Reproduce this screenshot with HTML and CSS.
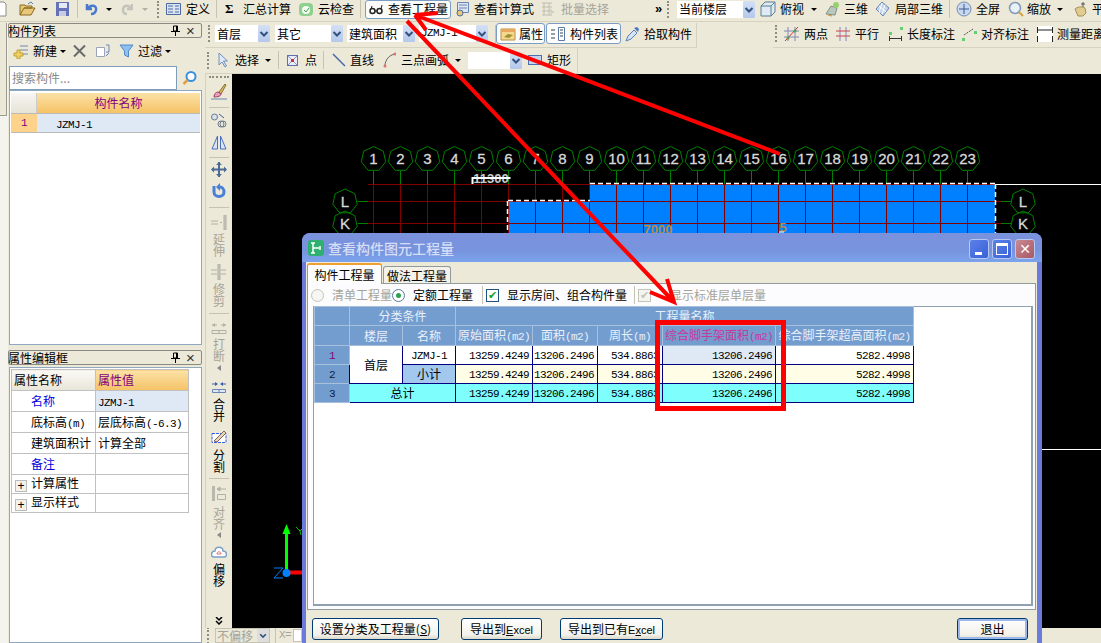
FILE: index.html
```html
<!DOCTYPE html>
<html lang="zh">
<head>
<meta charset="utf-8">
<title>查看构件图元工程量</title>
<link rel="stylesheet" href="styles.css">
</head>
<body>
<svg class="defs" width="0" height="0">
  <symbol id="chev" viewBox="0 0 12 16"><path d="M2.500 6.500 6 10l3.500-3.500" fill="none" stroke="#33507f" stroke-width="2"/></symbol>
  <symbol id="bub" viewBox="-13 -13 26 26" overflow="visible"><polygon points="0,-12.500 9.800,-7.800 12.200,2.800 5.400,11.300 -5.400,11.300 -12.200,2.800 -9.800,-7.800" fill="none" stroke="#008000"/></symbol>
  <symbol id="pin" viewBox="0 0 9 11"><path d="M2.500 1h4v5h-4zM0 6.500h9M4.500 7v4M5.500 1v5" fill="none" stroke="#000"/></symbol>
</svg>
<div class="app">
  <div class="topbar">
    <svg class="ic w8" viewBox="8 0 8 16"><path d="M2 1h10l2 2v12H2z" fill="#fff" stroke="#8a8a8a"/></svg>
    <svg class="ic w17 m11" viewBox="0 0 17 16"><path d="M1 14V4h5l1 1h6v2H5L1 14h11l4-7H5" fill="#e8c878" stroke="#8a6a20"/><path d="M9 3l3-2 2 2" fill="none" stroke="#5a7ab0"/></svg>
    <i class="caret m6"></i>
    <svg class="ic w14 m8" viewBox="0 0 14 16"><path d="M0 1h13v14H0z" fill="#6672b8"/><path d="M3 2h8v5H3z" fill="#e4e8f8"/><path d="M3 10h7v5H3z" fill="#c8cce0"/></svg>
    <i class="sep m7"></i>
    <svg class="ic w13 m7" viewBox="0 0 13 16"><path d="M2 3v5h5M3 8c2-5 9-4 8 1-.5 3-3 4-5 4" fill="none" stroke="#4a7ad0" stroke-width="2.500"/></svg>
    <i class="caret m8"></i>
    <svg class="ic w12 m9" viewBox="0 0 12 16"><path d="M11 3v5H6M10 8C8 3 2 4 2 9c0 3 2 4 4 4" fill="none" stroke="#c4c4ba" stroke-width="2.500"/></svg>
    <i class="caret dis m9"></i>
    <i class="grip m9"></i>
    <svg class="ic w15 m6" viewBox="0 0 15 16"><path d="M.5 2.500h14v11H.5z" fill="#dce4f4" stroke="#4a6aa0"/><path d="M2 5h5M2 8h5M2 11h5M9 5h4M9 8h4M9 11h4" stroke="#4a6aa0"/></svg>
    <span class="t w24 m5">定义</span>
    <i class="sep m6"></i>
    <span class="sigma m8">Σ</span>
    <span class="t w48 m9">汇总计算</span>
    <svg class="ic w16 m7" viewBox="0 0 16 16"><rect x="1" y="2" width="14" height="13" rx="4" fill="#8ed090"/><circle cx="8" cy="9" r="4" fill="#f4fbf2"/><path d="M6 9l2 2 3-4" fill="none" stroke="#48a050"/></svg>
    <span class="t w36 m4">云检查</span>
    <i class="sep m6"></i>
    <div class="tbtn top-active m4">
      <svg class="ic w14" viewBox="0 0 14 16"><circle cx="3.500" cy="10" r="2.500" fill="none" stroke="#222" stroke-width="1.500"/><circle cx="10.500" cy="10" r="2.500" fill="none" stroke="#222" stroke-width="1.500"/><path d="M6 10h2M12 8l1-4M2 8l1-3" stroke="#222"/></svg>
      <span class="t w60 m5">查看工程量</span>
    </div>
    <svg class="ic w15 m4" viewBox="0 0 15 16"><path d="M2.500 1.500h11v10h-11z" fill="#dfe6f2" stroke="#6a86b4"/><path d="M4 4h8M4 7h8" stroke="#6a86b4"/><circle cx="5" cy="12" r="3" fill="#e8c878" stroke="#4a6aa0"/></svg>
    <span class="t w60 m4">查看计算式</span>
    <svg class="ic w15 m7" viewBox="0 0 15 16"><path d="M1 2h10M1 6h10M1 10h10M1 14h10M3 2v12M8 2v12" stroke="#bdbdb0"/><path d="M9 7l5 5-3 0-1 3z" fill="#cfcfc4"/></svg>
    <span class="t w48 m5 off">批量选择</span>
    <span class="more m46">»</span>
    <i class="grip m5"></i>
    <div class="combo w78 m7"><span>当前楼层</span><svg class="chev"><use href="#chev"/></svg></div>
    <svg class="ic w16 m5" viewBox="0 0 16 16"><path d="M1 5l4-4h10v10l-4 4H1z" fill="#dfeaf4" stroke="#5a7f90"/><path d="M1 5h10v10M11 5l4-4" fill="none" stroke="#5a7f90"/></svg>
    <span class="t w24 m4">俯视</span>
    <i class="caret m7"></i>
    <svg class="ic w15 m8" viewBox="0 0 15 16"><path d="M1 13l5-8 6 2-2 7z" fill="#b8c8c0" stroke="#80907c"/><circle cx="11" cy="4" r="3" fill="#98d070"/><path d="M3 14l4 1" stroke="#d09040"/></svg>
    <span class="t w24 m4">三维</span>
    <svg class="ic w15 m7" viewBox="0 0 15 16"><path d="M1 8l6-7 7 6-6 8z" fill="#c4d4ec" stroke="#6a86b4"/><path d="M4 5l7 6M7 2l-3 10M10 4l-3 9" stroke="#fff"/></svg>
    <span class="t w48 m5">局部三维</span>
    <i class="sep m6"></i>
    <svg class="ic w16 m6" viewBox="0 0 16 16"><circle cx="8" cy="8" r="7" fill="#c8d8f0" stroke="#7a90b0"/><path d="M8 3v10M3 8h10" stroke="#3a5a90"/></svg>
    <span class="t w24 m4">全屏</span>
    <svg class="ic w16 m8" viewBox="0 0 16 16"><circle cx="7" cy="7" r="5.500" fill="#e8f0f8" stroke="#8098b8" stroke-width="1.500"/><path d="M11 11l4 4" stroke="#d8a040" stroke-width="2"/></svg>
    <span class="t w24 m3">缩放</span>
    <i class="caret m6"></i>
    <svg class="ic w16 m9" viewBox="0 0 16 16"><path d="M3 8c2-2 7-3 10-1l1 5-3 3H6z" fill="#e0cc90" stroke="#a89050"/><path d="M11 1v5M9 3h4" stroke="#555"/></svg>
    <span class="t w12 m4">平</span>
  </div>

  <div class="work">
    <div class="dock"><div class="dock-top"></div></div>
    <div class="left">
      <div class="ptitle"><span class="ptxt">构件列表</span><svg class="pin"><use href="#pin"/></svg><span class="px">×</span></div>
      <div class="ltools">
        <svg class="ic w16" viewBox="0 0 16 16"><path d="M7 3h8M7 7h8M7 11h8" stroke="#7088b0"/><path d="M1 10h3V7h3v3h3v3H7v3H4v-3H1z" fill="#f0d060" stroke="#c0a030"/></svg>
        <span class="t w24 m4">新建</span>
        <i class="caret m3"></i>
        <svg class="ic w13 m7" viewBox="0 0 13 13"><path d="M1 1l11 11M12 1L1 12" stroke="#6a6a6a" stroke-width="2"/></svg>
        <svg class="ic w15 m9" viewBox="0 0 15 16"><path d="M1.500 4.500h8v9h-8z" fill="#fff" stroke="#9aa4b8"/><path d="M11 2h3v7h-3M11 13l3-3" fill="none" stroke="#6a86c0"/></svg>
        <svg class="ic w15 m9" viewBox="0 0 15 16"><path d="M1 2h13L9.500 8v6l-4-2V8z" fill="#8cc0f0" stroke="#5088c8"/></svg>
        <span class="t w24 m4">过滤</span>
        <i class="caret m3"></i>
      </div>
      <div class="searchrow">
        <div class="search">搜索构件...</div>
        <svg class="ic w15 m5" viewBox="0 0 15 15"><circle cx="9" cy="6" r="4.500" fill="#fff" stroke="#3a90e0" stroke-width="2"/><path d="M5.500 9.500L1.500 13.500" stroke="#e0a040" stroke-width="2.500"/></svg>
      </div>
      <div class="lgrid">
        <div class="lhead"><div class="corner"></div><div class="lh-name">构件名称</div></div>
        <div class="lrow"><div class="lnum">1</div><div class="lcell"><span class="la">JZMJ-1</span></div></div>
      </div>
      <div class="ptitle second"><span class="ptxt">属性编辑框</span><svg class="pin"><use href="#pin"/></svg><span class="px">×</span></div>
      <div class="pframe">
        <table class="ptable">
          <tr class="pr-h"><th class="pth">属性名称</th><th class="pval-h">属性值</th></tr>
          <tr><td class="ind blue">名称</td><td class="sel"><span class="la">JZMJ-1</span></td></tr>
          <tr><td class="ind">底标高<span class="la">(m)</span></td><td>层底标高<span class="la">(-6.3)</span></td></tr>
          <tr><td class="ind">建筑面积计</td><td>计算全部</td></tr>
          <tr><td class="ind blue">备注</td><td></td></tr>
          <tr class="short"><td class="ind exp"><i class="plus">+</i>计算属性</td><td></td></tr>
          <tr class="short"><td class="ind exp"><i class="plus">+</i>显示样式</td><td></td></tr>
        </table>
      </div>
    </div>

    <div class="right">
      <div class="row1">
        <div class="seg seg1">
          <i class="grip m3"></i>
          <div class="combo w55 m4"><span>首层</span><svg class="chev"><use href="#chev"/></svg></div>
          <div class="combo w68 m5"><span>其它</span><svg class="chev"><use href="#chev"/></svg></div>
          <div class="combo w68 m4"><span>建筑面积</span><svg class="chev"><use href="#chev"/></svg></div>
          <div class="combo w69 m4"><span class="la">JZMJ-1</span><svg class="chev"><use href="#chev"/></svg></div>
          <i class="sep m7"></i>
          <div class="tbtn w49"><svg class="ic w16" viewBox="0 0 16 16"><path d="M1 3h14v11H1z" fill="#f4d890" stroke="#b89040"/><path d="M1 3h14v3H1z" fill="#e8a860"/><path d="M4 11l4-3 5 1-4 3z" fill="#a09030"/></svg><span class="t w24 m3">属性</span></div>
          <div class="tbtn w75 m1"><svg class="ic w16" viewBox="0 0 16 16"><path d="M8.500 1.500h6v13h-6z" fill="#fff" stroke="#5a78a8"/><path d="M10 4h3M10 7h3M10 10h3M1 4h4M1 8h4M1 12h4" stroke="#345"/></svg><span class="t w48 m4">构件列表</span></div>
          <svg class="ic w15 m4" viewBox="0 0 15 16"><path d="M1 15l2-5 6-6 3 3-6 6z" fill="#d4e4f4" stroke="#5a80b8"/><path d="M9 2l4 4 1-3-2-2z" fill="#4a78c0"/></svg>
          <span class="t w48 m4">拾取构件</span>
        </div>
        <div class="seg seg2">
          <i class="grip m2"></i>
          <svg class="ic w15 m6" viewBox="0 0 15 16"><path d="M0 5h15M0 11h15M4 1v14M11 1v14" stroke="#8088b8"/><path d="M1 15L14 1" stroke="#d03030"/><circle cx="4" cy="12" r="1.500" fill="#50a050"/><circle cx="11" cy="5" r="1.500" fill="#50a050"/></svg>
          <span class="t w24 m5">两点</span>
          <svg class="ic w14 m8" viewBox="0 0 14 16"><path d="M4 1v14M10 1v14" stroke="#8088c0"/><path d="M0 5h14M0 10h14" stroke="#d04050"/></svg>
          <span class="t w24 m5">平行</span>
          <svg class="ic w15 m9" viewBox="0 0 15 16"><path d="M1.500 10v5M13.500 10v5M1 12.500h13" stroke="#333"/><rect x="1" y="6" width="3" height="3" fill="#60d070"/><rect x="12" y="1" width="3" height="3" fill="#60d070"/></svg>
          <span class="t w48 m4">长度标注</span>
          <svg class="ic w17 m6" viewBox="0 0 17 16"><path d="M3 9l9-6" stroke="#555" stroke-dasharray="2 1"/><rect x="1" y="12" width="3" height="3" fill="#60d070"/><rect x="13" y="5" width="3" height="3" fill="#60d070"/></svg>
          <span class="t w48 m3">对齐标注</span>
          <svg class="ic w16 m8" viewBox="0 0 16 16"><rect width="16" height="16" fill="#fff"/><path d="M.5 1v6M15.500 1v6M0 4h16M.5 10v6M15.500 10v6" stroke="#222"/></svg>
          <span class="t w48 m4">测量距离</span>
        </div>
      </div>
      <div class="row2">
        <div class="seg seg3">
          <i class="grip m2"></i>
          <svg class="ic w10 m8" viewBox="0 0 10 16"><path d="M1 1v12l3-3 3 5 1.500-1-3-5h4z" fill="#dfe8f8" stroke="#7090b8"/></svg>
          <span class="t w24 m7">选择</span>
          <i class="caret m6"></i>
          <i class="sep m7"></i>
          <svg class="ic w11 m8" viewBox="0 0 11 11"><rect x=".5" y=".5" width="10" height="10" fill="#e8ecf8" stroke="#6070b0"/><path d="M1 1l9 9M10 1l-9 9" stroke="#9098c8"/><rect x="4" y="4" width="3" height="3" fill="#d03030"/></svg>
          <span class="t w12 m7">点</span>
          <i class="sep m6"></i>
          <svg class="ic w14 m8" viewBox="0 0 14 14"><path d="M1 1l12 12" stroke="#4868a8" stroke-width="1.500"/></svg>
          <span class="t w24 m4">直线</span>
          <svg class="ic w13 m9" viewBox="0 0 13 16"><path d="M2 14C2 8 6 3 12 2" fill="none" stroke="#606060"/><circle cx="2" cy="14" r="1.500" fill="#e07070"/><circle cx="12" cy="2" r="1.500" fill="#e07070"/></svg>
          <span class="t w48 m5">三点画弧</span>
          <i class="caret m6"></i>
          <div class="combo blank w54 m7"><svg class="chev"><use href="#chev"/></svg></div>
          <svg class="ic w14 m6" viewBox="0 0 14 10"><rect x=".5" y=".5" width="13" height="9" fill="#c4d4ee" stroke="#4a70b0"/></svg>
          <span class="t w24 m5">矩形</span>
        </div>
      </div>
      <div class="stage">
        <div class="vtools">
          <i class="vgrip"></i>
          <svg class="vic h17 t4" viewBox="0 0 16 17"><path d="M8 9l6-8 1 1-5 9z" fill="#d8b860" stroke="#8a7030"/><path d="M3 14c0-3 2-5 4-5l3 2c0 2-3 3-7 3z" fill="#e8a0b8" stroke="#a04060"/><path d="M0 16h16" stroke="#6a86b4"/></svg>
          <i class="vsep t7"></i>
          <svg class="vic h15 t5" viewBox="0 0 16 15"><circle cx="3.500" cy="4" r="3" fill="#d8e0ee" stroke="#6a7a90"/><circle cx="10" cy="11" r="3" fill="none" stroke="#6a7a90"/><circle cx="12" cy="11" r="3" fill="none" stroke="#6a7a90"/><path d="M8 1l5 4" stroke="#3a60a0"/></svg>
          <svg class="vic h15 t7" viewBox="0 0 16 15"><path d="M6.500 1v13H1zM9.500 1v13H15z" fill="#dbe4f4" stroke="#4a70c0"/></svg>
          <i class="vsep t7"></i>
          <svg class="vic h15 t4" viewBox="0 0 16 15"><path d="M8 0v15M1 7.500h14" stroke="#4a6a98" stroke-width="2"/><path d="M8 0l-3 3h6zM8 15l-3-3h6zM0 7.500l3-3v6zM16 7.500l-3-3v6z" fill="#4a6a98"/></svg>
          <svg class="vic h15 t6" viewBox="0 0 16 15"><path d="M3 3v6c0 6 10 6 10 0 0-3-2-5-4-5" fill="none" stroke="#4a80d8" stroke-width="3"/><path d="M9 0v8L5 4z" fill="#4a80d8"/></svg>
          <i class="vsep t9"></i>
          <svg class="vic h15 t7" viewBox="0 0 16 15"><path d="M0 6h7M0 9h7M9 7.500h2" stroke="#b0b0a4"/><rect x="13" y="0" width="2" height="15" fill="#c8c8bc" stroke="#b0b0a4"/></svg>
          <span class="vtxt off t3">延伸</span>
          <svg class="vic h16 t7" viewBox="0 0 16 16"><path d="M0 6h6M0 10h6M10 6h5M10 10h5" stroke="#b0b0a4"/><rect x="7" y="0" width="2" height="16" fill="#c8c8bc" stroke="#b0b0a4"/></svg>
          <span class="vtxt off t3">修剪</span>
          <i class="vsep t6"></i>
          <svg class="vic h12 t8" viewBox="0 0 16 12"><path d="M1 3h5M15 3h-5M1 8.500h14v3H1zM8 8.500v3" fill="none" stroke="#b0b0a4"/><path d="M1 3l3-2v4zM15 3l-3-2v4z" fill="#b0b0a4"/></svg>
          <span class="vtxt off t4">打断</span>
          <i class="vtri t3"></i>
          <svg class="vic h12 t10" viewBox="0 0 16 12"><path d="M1 3h5M15 3h-5" stroke="#3a60b0"/><path d="M7 3L4 1v4zM9 3l3-2v4z" fill="#3a60b0"/><path d="M1.500 8.500h13v3h-13zM8 8.500v3" fill="#dfe6f4" stroke="#6a86b4"/></svg>
          <span class="vtxt t5">合并</span>
          <svg class="vic h15 t7" viewBox="0 0 16 15"><path d="M1 4.500h14v9H1z" fill="#fff" stroke="#3a60e0" stroke-dasharray="3 1"/><path d="M3 12L13 2l2 2L6 13z" fill="#e8d8b0" stroke="#806060"/></svg>
          <span class="vtxt t5">分割</span>
          <i class="vsep t5"></i>
          <svg class="vic h15 t7" viewBox="0 0 16 15"><rect x="1" y="0" width="3" height="15" fill="#b8b8ac"/><path d="M6 3h9M6 3l3-2v4z" stroke="#b0b0a4" fill="#b0b0a4"/><path d="M6.500 8.500h8v5h-8z" fill="none" stroke="#b0b0a4"/></svg>
          <span class="vtxt off t5">对齐</span>
          <i class="vtri t2"></i>
          <svg class="vic h12 t8" viewBox="0 0 16 12"><path d="M3 11C-1 11 0 5 4 5c0-5 8-5 8 0 4 0 5 6 1 6z" fill="#fff" stroke="#7aa0c8" stroke-width="1.500"/><path d="M6 8c0-3 4-3 4 0z" fill="none" stroke="#e07070"/></svg>
          <span class="vtxt t5">偏移</span>
          <svg class="vic h8 t30" viewBox="0 0 8 8"><path d="M1 0l3 3 3-3M1 4l3 3 3-3" fill="none" stroke="#000" stroke-width="1.500"/></svg>
        </div>
        <div class="canvas">
          <svg class="cad" viewBox="232 74 869 554" width="869" height="554">
            <path d="M590 184h405v60H508v-43h82z" fill="#0080ff"/>
            <path class="wl" d="M995 184.500h106M1042 449.500h59"/>
            <path class="gl" d="M373.500 184v60M400.500 184v60M427.500 184v60M454.500 184v60M481.500 184v60M508.500 184v60M535.500 184v60M562.500 184v60M589.500 184v60M616.500 184v60M643.500 184v60M670.500 184v60M697.500 184v60M724.500 184v60M751.500 184v60M778.500 184v60M805.500 184v60M832.500 184v60M859.500 184v60M886.500 184v60M913.500 184v60M940.500 184v60M967.500 184v60M368 184.500h627M368 201.500h627M368 223.500h627M995 201.500h6M995 223.500h6"/>
            <path class="stem" d="M373.500 171v13M400.500 171v13M427.500 171v13M454.500 171v13M481.500 171v13M508.500 171v13M535.500 171v13M562.500 171v13M589.500 171v13M616.500 171v13M643.500 171v13M670.500 171v13M697.500 171v13M724.500 171v13M751.500 171v13M778.500 171v13M805.500 171v13M832.500 171v13M859.500 171v13M886.500 171v13M913.500 171v13M940.500 171v13M967.500 171v13M358 201.500h10M358 223.500h10M1001 201.500h10M1001 223.500h10"/>
            <path class="dash" d="M508 200.500h82M590 183.500h405M507.500 201v40M995.500 184v60"/>
            <g class="bubs">
              <use href="#bub" x="360.500" y="146" width="26" height="26"/><use href="#bub" x="387.500" y="146" width="26" height="26"/><use href="#bub" x="414.500" y="146" width="26" height="26"/><use href="#bub" x="441.500" y="146" width="26" height="26"/><use href="#bub" x="468.500" y="146" width="26" height="26"/><use href="#bub" x="495.500" y="146" width="26" height="26"/><use href="#bub" x="522.500" y="146" width="26" height="26"/><use href="#bub" x="549.500" y="146" width="26" height="26"/><use href="#bub" x="576.500" y="146" width="26" height="26"/><use href="#bub" x="603.500" y="146" width="26" height="26"/><use href="#bub" x="630.500" y="146" width="26" height="26"/><use href="#bub" x="657.500" y="146" width="26" height="26"/><use href="#bub" x="684.500" y="146" width="26" height="26"/><use href="#bub" x="711.500" y="146" width="26" height="26"/><use href="#bub" x="738.500" y="146" width="26" height="26"/><use href="#bub" x="765.500" y="146" width="26" height="26"/><use href="#bub" x="792.500" y="146" width="26" height="26"/><use href="#bub" x="819.500" y="146" width="26" height="26"/><use href="#bub" x="846.500" y="146" width="26" height="26"/><use href="#bub" x="873.500" y="146" width="26" height="26"/><use href="#bub" x="900.500" y="146" width="26" height="26"/><use href="#bub" x="927.500" y="146" width="26" height="26"/><use href="#bub" x="954.500" y="146" width="26" height="26"/>
              <use href="#bub" x="332" y="188.500" width="26" height="26"/><use href="#bub" x="332" y="210.500" width="26" height="26"/><use href="#bub" x="1010" y="188.500" width="26" height="26"/><use href="#bub" x="1010" y="210.500" width="26" height="26"/>
            </g>
            <g class="bn">
              <text x="373.500" y="164">1</text><text x="400.500" y="164">2</text><text x="427.500" y="164">3</text><text x="454.500" y="164">4</text><text x="481.500" y="164">5</text><text x="508.500" y="164">6</text><text x="535.500" y="164">7</text><text x="562.500" y="164">8</text><text x="589.500" y="164">9</text><text x="616.500" y="164">10</text><text x="643.500" y="164">11</text><text x="670.500" y="164">12</text><text x="697.500" y="164">13</text><text x="724.500" y="164">14</text><text x="751.500" y="164">15</text><text x="778.500" y="164">16</text><text x="805.500" y="164">17</text><text x="832.500" y="164">18</text><text x="859.500" y="164">19</text><text x="886.500" y="164">20</text><text x="913.500" y="164">21</text><text x="940.500" y="164">22</text><text x="967.500" y="164">23</text>
              <text x="345" y="207">L</text><text x="345" y="229">K</text><text x="1023" y="207">L</text><text x="1023" y="229">K</text>
            </g>
            <text class="dim" x="491" y="183">11300</text>
            <path class="wl strike" d="M472.500 184v-6h38"/>
            <text class="dim orange" x="658" y="234">7000</text>
            <path class="wl" d="M644 234h6"/>
            <text class="dim orange" x="783" y="232">5</text>
            <path class="wl" d="M779 232h5"/>
            <path class="axg" d="M286.500 572V534"/>
            <path class="agh" d="M286.500 524l-4 10h8z"/>
            <path class="axr" d="M290 572.500h14"/>
            <circle cx="286.500" cy="573" r="4" fill="#0080ff"/>
            <path class="axz" d="M274 568h9l-9 10h9"/>
            <path class="axy" d="M296 527l4 4 3-3M300 531l1 4"/>
          </svg>
        </div>
      </div>
      <div class="status">
        <i class="grip m2"></i>
        <div class="combo w55 off-combo m5"><span>不偏移</span><svg class="chev"><use href="#chev"/></svg></div>
        <i class="sep m5"></i>
        <span class="la off m3">X=</span>
        <div class="xbox"></div>
      </div>
    </div>
  </div>

  <div class="dialog">
    <div class="dtitle">
      <svg class="dlogo" viewBox="0 0 16 16"><rect width="16" height="16" rx="3" fill="#30b070"/><path d="M5 3v10M3 3h4M3 13h4M5 8h6M12 6v4" stroke="#fff" stroke-width="1.500" fill="none"/></svg>
      <span class="dtxt">查看构件图元工程量</span>
      <div class="wbtns">
        <i class="wb"><b class="wmin"></b></i>
        <i class="wb"><b class="wmax"></b></i>
        <i class="wb close">✕</i>
      </div>
    </div>
    <div class="dbody">
      <div class="tabs"><div class="tab on">构件工程量</div><div class="tab">做法工程量</div></div>
      <div class="tabpanel">
        <div class="opts">
          <i class="radio"></i><span class="t w60 m8 off">清单工程量</span>
          <i class="radio on"></i><span class="t w60 m8">定额工程量</span>
          <i class="sep m9"></i>
          <i class="chk m3">✔</i><span class="t m8">显示房间、组合构件量</span>
          <i class="sep m7"></i>
          <i class="chk dis m3">✔</i><span class="t m19 off">显示标准层单层量</span>
        </div>
        <div class="gridframe">
          <table class="qt">
            <colgroup><col class="c0"><col class="c1"><col class="c1"><col class="c3"><col class="c4"><col class="c4"><col class="c6"><col class="c7"></colgroup>
            <tr class="hr1"><th class="rh"></th><th colspan="2">分类条件</th><th colspan="5">工程量名称</th></tr>
            <tr class="hr2"><th class="rh"></th><th>楼层</th><th>名称</th><th>原始面积<span class="la">(m2)</span></th><th>面积<span class="la">(m2)</span></th><th>周长<span class="la">(m)</span></th><th class="pink">综合脚手架面积<span class="la">(m2)</span></th><th>综合脚手架超高面积<span class="la">(m2)</span></th></tr>
            <tr><th class="rh act"><span class="la">1</span></th><td rowspan="2" class="ctr">首层</td><td class="ctr"><span class="la">JZMJ-1</span></td><td class="n"><span class="la">13259.4249</span></td><td class="n"><span class="la">13206.2496</span></td><td class="n"><span class="la">534.8863</span></td><td class="n selc"><span class="la">13206.2496</span></td><td class="n"><span class="la">5282.4998</span></td></tr>
            <tr class="sub"><th class="rh"><span class="la">2</span></th><td class="ctr subname">小计</td><td class="n"><span class="la">13259.4249</span></td><td class="n"><span class="la">13206.2496</span></td><td class="n"><span class="la">534.8863</span></td><td class="n"><span class="la">13206.2496</span></td><td class="n"><span class="la">5282.4998</span></td></tr>
            <tr class="tot"><th class="rh"><span class="la">3</span></th><td colspan="2" class="ctr">总计</td><td class="n"><span class="la">13259.4249</span></td><td class="n"><span class="la">13206.2496</span></td><td class="n"><span class="la">534.8863</span></td><td class="n"><span class="la">13206.2496</span></td><td class="n"><span class="la">5282.4998</span></td></tr>
          </table>
        </div>
      </div>
      <div class="dfoot">
        <button class="btn b1">设置分类及工程量(<u>S</u>)</button>
        <button class="btn b2">导出到<span class="ex"><u>E</u>xcel</span></button>
        <button class="btn b3">导出到已有<span class="ex">E<u>x</u>cel</span></button>
        <button class="btn b4">退出</button>
      </div>
    </div>
  </div>

  <svg class="marks" viewBox="0 0 1101 643" width="1101" height="643">
    <path d="M780 154L415 15L438 13M415 15L426 30M407 21L674 302M667 279L674 302L650 292"/>
    <rect x="657.500" y="322.500" width="126" height="86"/>
  </svg>
</div>
</body>
</html>
```
FILE: styles.css
```css
* { box-sizing: border-box; }
html, body { margin: 0; padding: 0; }
body { font: 12px/14px "Noto Sans CJK SC", "Liberation Sans", sans-serif; color: #000; background: #ece9d8; overflow: hidden; }
i { font-style: normal; display: block; flex: none; }
.defs { position: absolute; }
.app { position: relative; width: 1101px; height: 643px; overflow: hidden; display: flex; flex-direction: column; background: #ece9d8; }
.la { font-family: "Liberation Mono", "Noto Sans CJK SC", monospace; font-size: 11px; letter-spacing: -.6px; line-height: 1; }

/* spacing helpers */
.m1 { margin-left: 1px; } .m2 { margin-left: 2px; } .m3 { margin-left: 3px; } .m4 { margin-left: 4px; }
.m5 { margin-left: 5px; } .m6 { margin-left: 6px; } .m7 { margin-left: 7px; } .m8 { margin-left: 8px; }
.m9 { margin-left: 9px; } .m10 { margin-left: 10px; } .m11 { margin-left: 11px; } .m19 { margin-left: 19px; } .m46 { margin-left: 46px; }
.t2 { margin-top: 2px; } .t3 { margin-top: 3px; } .t4 { margin-top: 4px; } .t5 { margin-top: 5px; } .t6 { margin-top: 6px; }
.t7 { margin-top: 7px; } .t8 { margin-top: 8px; } .t9 { margin-top: 9px; } .t10 { margin-top: 10px; } .t30 { margin-top: 30px; }

.ic { flex: none; display: block; height: 16px; }
.w8 { width: 8px; } .w10 { width: 10px; } .w11 { width: 11px; height: 11px; } .w12 { width: 12px; } .w13 { width: 13px; } .w14 { width: 14px; }
.w15 { width: 15px; } .w16 { width: 16px; } .w17 { width: 17px; } .w24 { width: 24px; } .w36 { width: 36px; } .w48 { width: 48px; } .w60 { width: 60px; }
.t { flex: none; white-space: nowrap; }
.off { color: #a6a498; }
.caret { height: 0; border: 3px solid transparent; border-top: 3px solid #000; border-bottom-width: 0; width: 6px; }
.caret.dis { border-top-color: #b0b0a4; }
.sep { width: 1px; height: 18px; background: #c6c3b2; }
.grip { width: 3px; height: 17px; border-left: 2px dotted #8d8d84; }
.sigma { flex: none; width: 9px; font: bold 13px/14px "Liberation Serif", serif; }
.more { flex: none; width: 7px; font: bold 13px/14px "Liberation Sans", sans-serif; }

.combo { flex: none; height: 17px; background: #fff; display: flex; align-items: center; justify-content: space-between; padding-left: 2px; }
.w54 { width: 54px; } .w55 { width: 55px; } .w68 { width: 68px; } .w69 { width: 69px; } .w78 { width: 78px; }
.chev { width: 12px; height: 17px; background: linear-gradient(#d4e0f5, #b4c8ec); flex: none; border-radius: 1px; }
.off-combo { color: #a6a498; background: #ece9d8; border: 1px solid #c6c3b2; height: 15px; padding-left: 1px; }
.off-combo .chev { height: 13px; background: #ddd; }
.blank { justify-content: flex-end; }

.tbtn { flex: none; display: flex; align-items: center; height: 21px; border: 1px solid #7c9cc4; border-radius: 3px; background: #fbfbf9; padding-left: 3px; }
.top-active { width: 86px; height: 19px; }
.w49 { width: 49px; } .w75 { width: 75px; }

.topbar { flex: none; height: 22px; padding-bottom: 3px; display: flex; align-items: center; border-bottom: 1px solid #d5d2c0; }

.work { flex: 1; min-height: 0; display: flex; margin-top: 1px; }
.dock { flex: none; width: 8px; background: #f5f3ee; }
.dock-top { width: 7px; height: 93px; background: #ece9d8; border-right: 1px solid #9a9a90; border-bottom: 1px solid #9a9a90; }
.left { flex: none; width: 197px; display: flex; flex-direction: column; }
.ptitle { flex: none; height: 15px; width: 194px; border: 1px solid #8a8a80; border-radius: 2px; display: flex; align-items: center; overflow: hidden; background: #ece9d8; }
.second { margin-top: 5px; }
.ptxt { flex: 1; line-height: 13px; margin-left: -1px; }
.pin { width: 9px; height: 11px; flex: none; }
.px { width: 21px; font: 15px/12px "Liberation Sans", sans-serif; text-align: center; color: #333; }
.ltools { flex: none; height: 26px; display: flex; align-items: center; padding-left: 5px; }
.searchrow { flex: none; height: 25px; margin-top: 1px; display: flex; align-items: center; padding-left: 1px; }
.search { flex: none; width: 168px; height: 24px; border: 1px solid #7f9db9; background: #fff; color: #8a8a8a; padding: 3px 2px; line-height: 16px; }
.lgrid { flex: none; height: 255px; width: 193px; margin-left: 1px; background: #fff; border: 1px solid #8fa8c0; padding: 2px 1px; }
.lhead { display: flex; height: 21px; border-bottom: 1px solid #bbb; }
.corner { width: 26px; background: linear-gradient(#f7f6f2, #e6e3d6); border-right: 1px solid #ccc; }
.lh-name { width: 163px; background: linear-gradient(#fbe2a6, #f5c266); color: #800080; text-align: center; line-height: 20px; }
.lrow { display: flex; height: 19px; border-bottom: 1px solid #bbb; }
.lnum { width: 26px; background: #fdd38c; color: #800080; font: 11px/18px "Liberation Mono", monospace; padding-left: 10px; }
.lcell { width: 163px; background: #dfe8f5; line-height: 18px; padding-left: 19px; }
.pframe { flex: 1; margin-top: 2px; width: 193px; margin-left: 1px; background: #fff; border: 1px solid #8fa8c0; padding: 1px 1px 0; }
.ptable { border-collapse: collapse; table-layout: fixed; width: 178px; }
.ptable td, .ptable th { border: 1px solid #c0c0c0; height: 21px; padding: 0 2px; font-weight: normal; text-align: left; white-space: nowrap; overflow: hidden; }
.ptable .pth { width: 84px; background: linear-gradient(#faf9f5, #e8e5d8); padding-left: 2px; }
.ptable .pval-h { background: linear-gradient(#fbe2a6, #f5c266); color: #800080; }
.ptable .ind { padding-left: 19px; width: 84px; }
.ptable .exp { padding-left: 3px; }
.blue { color: #0000e0; }
.ptable .sel { background: #dfe8f5; }
.short td { height: 19px !important; }
.plus { display: inline-block; width: 12px; height: 12px; border: 1px solid #bbb; background: #f4f2ea; margin-right: 4px; font: 12px/10px "Liberation Sans", sans-serif; text-align: center; vertical-align: -2px; }

.right { flex: 1; min-width: 0; display: flex; flex-direction: column; }
.row1 { flex: none; height: 25px; display: flex; }
.row2 { flex: none; height: 26px; }
.seg { display: flex; align-items: center; border-bottom: 1px solid #d5d2c0; height: 100%; }
.row1 .seg { padding-bottom: 3px; }
.row2 .seg { padding-bottom: 1px; }
.seg1 { width: 492px; border-right: 1px solid #d5d2c0; }
.seg2 { margin-left: 76px; flex: 1; overflow: hidden; }
.seg3 { width: 373px; border-right: 1px solid #d5d2c0; }
.stage { flex: 1; min-height: 0; display: flex; }
.vtools { flex: none; width: 27px; display: flex; flex-direction: column; align-items: center; border-left: 1px solid #d5d2c0; }
.vgrip { width: 20px; height: 3px; margin-top: 2px; border-top: 2px dotted #8d8d84; }
.vic { flex: none; display: block; width: 16px; }
.h8 { height: 8px; width: 8px; } .h12 { height: 12px; } .h15 { height: 15px; } .h16 { height: 16px; } .h17 { height: 17px; }
.vsep { width: 20px; height: 1px; background: #c6c3b2; }
.vtxt { flex: none; width: 12px; height: 24px; line-height: 12px; }
.vtri { width: 0; height: 0; border: 3px solid transparent; border-right: 4px solid #888; border-left-width: 0; }
.canvas { flex: 1; background: #000; overflow: hidden; }
.cad { display: block; }
.gl { stroke: #800000; fill: none; }
.stem { stroke: #008000; fill: none; }
.wl { stroke: #fff; fill: none; }
.strike { stroke-width: 2; }
.dash { stroke: #fff; stroke-width: 1.500; stroke-dasharray: 5 3; fill: none; }
.bn text { font: 15px "Liberation Sans", sans-serif; fill: #d8d8d8; text-anchor: middle; stroke: #d8d8d8; stroke-width: .3; }
.dim { font: bold 13px "Liberation Sans", sans-serif; fill: #c8c8c8; text-anchor: middle; }
.dim.orange { fill: #b08a50; }
.axg { stroke: #00ff00; stroke-width: 3; }
.agh { fill: #00ff00; }
.axr { stroke: #ff0000; stroke-width: 4; }
.axz { stroke: #0080ff; fill: none; }
.axy { stroke: #00c000; fill: none; }
.status { flex: none; height: 15px; display: flex; align-items: center; overflow: hidden; }
.xbox { width: 9px; height: 13px; margin-left: 2px; border: 1px solid #c6c3b2; background: #fff; }

/* dialog window */
.dialog { position: absolute; left: 302px; top: 233px; width: 740px; height: 420px; border-radius: 8px 8px 0 0; background: #6b7bdb; padding: 0 5px 0 4px; display: flex; flex-direction: column; }
.dtitle { flex: none; height: 29px; margin: 0 -5px 0 -4px; padding: 6px 7px 0 6px; display: flex; align-items: flex-start; border-radius: 8px 8px 0 0; background: linear-gradient(#7b92dc, #7893de 60%, #7aa4ec); }
.dlogo { width: 16px; height: 16px; flex: none; margin-top: 1px; }
.dtxt { margin-left: 4px; font-size: 14px; line-height: 18px; color: #d6def5; font-weight: 500; flex: 1; }
.wbtns { display: flex; gap: 3px; }
.wb { width: 20px; height: 20px; border: 1px solid #b8c8f0; border-radius: 3px; background: linear-gradient(135deg, #5a80e8, #3a62d8); position: relative; color: #fff; text-align: center; font: bold 14px/18px "DejaVu Sans", sans-serif; }
.wb.close { background: linear-gradient(135deg, #c88a90, #a85868); }
.wmin { position: absolute; left: 5px; bottom: 3px; width: 7px; height: 3px; background: #fff; }
.wmax { position: absolute; left: 3px; top: 3px; width: 12px; height: 12px; border: 1px solid #fff; border-top-width: 3px; }
.dbody { flex: 1; min-height: 0; background: #ece9d8; display: flex; flex-direction: column; }
.tabs { flex: none; height: 22px; display: flex; align-items: flex-end; padding-left: 1px; margin-bottom: -1px; }
.tab { height: 18px; width: 68px; text-align: center; line-height: 17px; background: #f4f2e8; border: 1px solid #919b9c; border-bottom: 0; border-radius: 3px 3px 0 0; margin-left: 1px; font-size: 12px; }
.tab.on { height: 21px; width: 75px; margin-left: 0; background: #fdfdfd; border-top: 2px solid #f0a030; line-height: 19px; position: relative; z-index: 1; }
.tabpanel { flex: none; height: 327px; width: 729px; margin-left: 1px; border: 1px solid #919b9c; background: #fcfcfe; display: flex; flex-direction: column; padding-left: 5px; }
.opts { flex: none; height: 22px; display: flex; align-items: center; margin-left: -2px; }
.radio { width: 13px; height: 13px; border-radius: 50%; border: 1px solid #c4c4bc; background: #f6f6f2; position: relative; }
.radio.on { border-color: #5a7a98; background: #fff; }
.radio.on::after { content: ""; position: absolute; left: 3px; top: 3px; width: 5px; height: 5px; border-radius: 50%; background: #30a050; }
.chk { width: 13px; height: 13px; border: 1px solid #1c5180; background: #fff; color: #21a121; font: 11px/11px "DejaVu Sans", sans-serif; text-align: center; }
.chk.dis { border-color: #c4c4b8; color: #c4c4b8; background: #f4f4f0; }
.gridframe { flex: none; width: 720px; height: 300px; background: #fff; border: 1px solid #8fa0b0; border-right-width: 2px; border-bottom-width: 2px; }
.qt { border-collapse: collapse; table-layout: fixed; width: 599px; margin-top: -1px; }
.c0 { width: 35px; } .c1 { width: 53px; } .c3 { width: 77px; } .c4 { width: 65px; } .c6 { width: 113px; } .c7 { width: 138px; }
.qt th, .qt td { padding: 0 0 1px; height: 19px; font-weight: normal; overflow: hidden; white-space: nowrap; line-height: 13px; }
.qt th { background: #749dcf; color: #e8f0fa; border: 1px solid #a8c0dc; text-align: center; }
.qt .hr1 th { height: 19px; }
.qt .hr2 th { height: 20px; }
.qt .rh { color: #0c1c3c; }
.qt .rh.act { color: #800080; }
.qt .pink { color: #c8389c; }
.qt td { border: 1px solid #000080; background: #fff; }
.qt .ctr { text-align: center; }
.qt .n { text-align: right; padding-right: 3px; }
.qt .selc { background: #dfe8f5; }
.sub .n { background: #fffde6; }
.qt .subname { background: #a2c8ee; }
.tot td { background: #7ffefe; }
.dfoot { flex: 1; display: flex; align-items: flex-start; padding-top: 8px; padding-left: 6px; }
.btn { flex: none; height: 22px; padding: 0; font: 12px/16px "Noto Sans CJK SC", sans-serif; color: #000; border: 1px solid #003c74; border-radius: 3px; background: linear-gradient(#fff, #f2f1ea 80%, #dcd8c8); }
.b1 { width: 127px; }
.b2 { width: 81px; margin-left: 22px; }
.b3 { width: 103px; margin-left: 18px; }
.b4 { width: 71px; margin-left: 294px; box-shadow: inset 0 0 0 2px #9ab8ea; }
.ex { font: 11px "Liberation Sans", sans-serif; }

.marks { position: absolute; left: 0; top: 0; pointer-events: none; }
.marks path { fill: none; stroke: #ff0000; stroke-width: 4; }
.marks rect { fill: none; stroke: #ff0000; stroke-width: 5; }
```
